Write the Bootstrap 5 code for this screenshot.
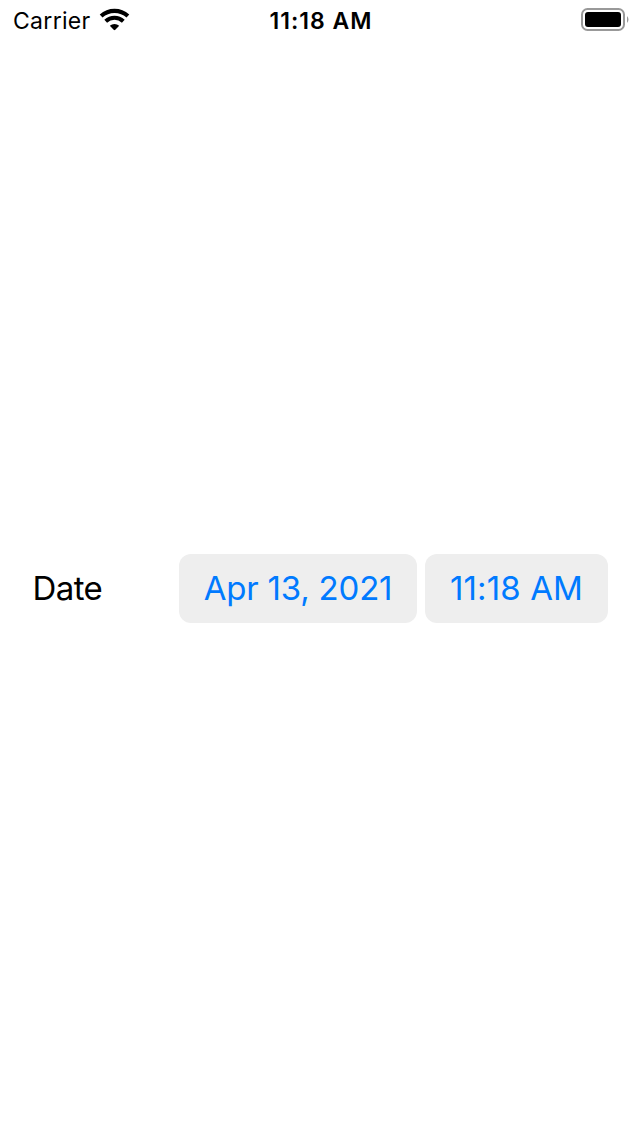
<!DOCTYPE html>
<html lang="en">
<head>
<meta charset="utf-8">
<meta name="viewport" content="width=device-width, initial-scale=1">
<title>Date</title>
<link href="https://cdn.jsdelivr.net/npm/bootstrap@5.3.0/dist/css/bootstrap.min.css" rel="stylesheet">
<style>
body { font-family: Inter, "Liberation Sans", sans-serif; color: #000; background: #fff; }
.status-bar { height: 40px; padding: 1px 10px 0 13px; font-size: 23px; line-height: 40px; }
.carrier { letter-spacing: .3px; }
.wifi { margin: 0 0 3px 8px; }
.clock { font-weight: 600; font-size: 23px; letter-spacing: 1px; padding-right: 1px; }
.form-area { padding: 1px 32px 0 33px; font-size: 33px; line-height: 40px; }
.date-label { letter-spacing: -.6px; padding-bottom: 1px; margin-left: -.5px; }
.picker-btn { --bs-btn-padding-x: 0; --bs-btn-padding-y: 0; --bs-btn-border-width: 0; --bs-btn-font-size: 33px; --bs-btn-color: #007aff; --bs-btn-bg: #eee; --bs-btn-hover-bg: #e6e6e6; --bs-btn-hover-color: #007aff; --bs-btn-border-radius: 12px; height: 69px; line-height: 69px; white-space: nowrap; }
.date-btn { width: 238px; letter-spacing: -.2px; }
.time-btn { width: 183px; letter-spacing: .1px; }
</style>
</head>
<body class="vh-100 d-flex flex-column overflow-hidden">
<header class="status-bar row g-0 w-100">
  <div class="col d-flex align-items-center">
    <span class="carrier">Carrier</span>
    <svg class="wifi" width="31" height="23" viewBox="0 0 31 23" aria-hidden="true"><g fill="none" stroke="#000" stroke-width="4.1"><path d="M2.1 8A20.1 20.1 0 0 1 28.9 8"/><path d="M6.7 13.2A13.1 13.1 0 0 1 24.3 13.2"/></g><path d="M10.8 17.7A7.1 7.1 0 0 1 20.2 17.7L16.3 21.8Q15.5 22.6 14.7 21.8Z"/></svg>
  </div>
  <div class="col-auto clock">11:18 AM</div>
  <div class="col d-flex justify-content-end align-items-center">
    <svg class="mb-1" width="49" height="24" viewBox="0 0 49 24" aria-hidden="true"><rect x="1" y="2" width="42" height="21" rx="5.5" fill="none" stroke="#999" stroke-width="2"/><rect x="4" y="5" width="36" height="15" rx="3"/><path d="M46 9q3 3.5 0 7z" fill="#999"/></svg>
  </div>
</header>
<main class="form-area flex-grow-1 d-flex align-items-center justify-content-between">
  <span class="date-label">Date</span>
  <div class="d-flex gap-2">
    <button type="button" class="btn picker-btn date-btn">Apr 13, 2021</button>
    <button type="button" class="btn picker-btn time-btn">11:18 AM</button>
  </div>
</main>
<script src="https://cdn.jsdelivr.net/npm/bootstrap@5.3.0/dist/js/bootstrap.bundle.min.js"></script>
</body>
</html>
